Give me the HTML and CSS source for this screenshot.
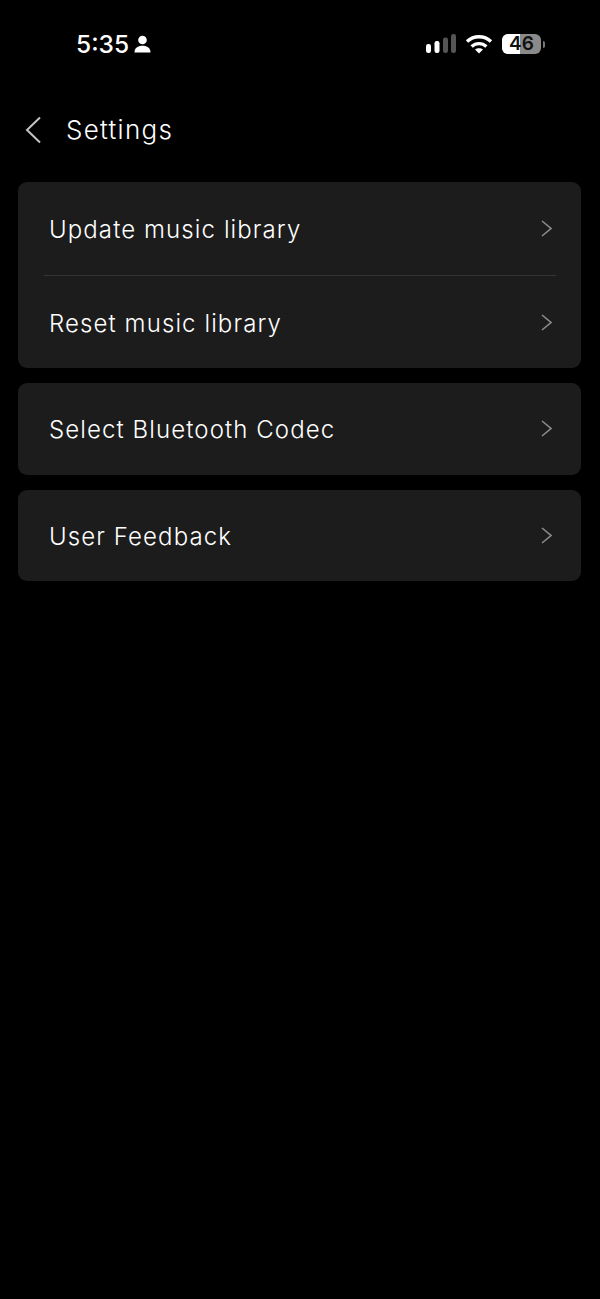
FILE: index.html
```html
<!DOCTYPE html>
<html lang="en">
<head>
<meta charset="utf-8">
<title>Settings</title>
<link rel="stylesheet" href="styles.css">
</head>
<body>
<div class="status">
  <div class="status-left">
    <span class="time">5:35</span>
    <svg class="person" width="17" height="18" viewBox="0 0 17 18"><circle cx="8.5" cy="5" r="4.300" fill="#fff"/><path d="M0.500 17.500c0-4.600 3.300-6.700 8-6.700s8 2.100 8 6.700z" fill="#fff"/></svg>
  </div>
  <div class="status-right">
    <svg width="30" height="20" viewBox="0 0 30 20"><rect x="0" y="10" width="5" height="9" rx="2.200" fill="#fff"/><rect x="8.500" y="7" width="5" height="12" rx="2.200" fill="#fff"/><rect x="17" y="3.500" width="5" height="15.500" rx="2.200" fill="#555"/><rect x="25" y="0" width="5" height="19" rx="2.200" fill="#555"/></svg>
    <svg class="wifi" width="28" height="20" viewBox="0 0 28 20" fill="none" stroke="#fff" stroke-width="3.400"><path d="M2 7.500c6.800-6.400 17.200-6.400 24 0"/><path d="M6.600 12.500c4.400-3.900 10.400-3.900 14.800 0"/><path d="M14 19.500l-4-4c2.300-1.800 5.700-1.800 8 0z" fill="#fff" stroke="none"/></svg>
    <div class="battery">
      <div class="battery-body"><div class="battery-fill"></div><span class="battery-num">46</span></div>
      <span class="battery-cap"></span>
    </div>
  </div>
</div>
<header class="nav">
  <svg class="back" width="16" height="28" viewBox="0 0 16 28" fill="none" stroke="#c4c4c4" stroke-width="2"><path d="M15 1.500L2 14l13 12.500"/></svg>
  <h1 class="title">Settings</h1>
</header>
<main class="groups">
  <section class="card">
    <div class="row row-first"><span class="label">Update music library</span><svg class="chev" width="11" height="17" viewBox="0 0 11 17" fill="none" stroke="#8c8c8c" stroke-width="1.600"><path d="M1 1l9 7.500L1 16"/></svg></div>
    <div class="divider"></div>
    <div class="row row-second"><span class="label">Reset music library</span><svg class="chev" width="11" height="17" viewBox="0 0 11 17" fill="none" stroke="#8c8c8c" stroke-width="1.600"><path d="M1 1l9 7.500L1 16"/></svg></div>
  </section>
  <section class="card">
    <div class="row"><span class="label">Select Bluetooth Codec</span><svg class="chev" width="11" height="17" viewBox="0 0 11 17" fill="none" stroke="#8c8c8c" stroke-width="1.600"><path d="M1 1l9 7.500L1 16"/></svg></div>
  </section>
  <section class="card">
    <div class="row"><span class="label">User Feedback</span><svg class="chev" width="11" height="17" viewBox="0 0 11 17" fill="none" stroke="#8c8c8c" stroke-width="1.600"><path d="M1 1l9 7.500L1 16"/></svg></div>
  </section>
</main>
</body>
</html>
```
FILE: styles.css
```css
* { box-sizing: border-box; }
html, body { margin: 0; padding: 0; background: #000; }
body { width: 600px; height: 1299px; overflow: hidden; font-family: "Inter", "Liberation Sans", sans-serif; color: #f2f2f2; }
.status { height: 88px; display: flex; justify-content: space-between; align-items: center; padding: 0 55px 0 76px; }
.status-left { display: flex; align-items: center; gap: 5px; }
.time { font-size: 24.500px; font-weight: 500; color: #fff; line-height: 30px; }
.person { display: block; }
.status-right { display: flex; align-items: center; gap: 9px; }
.wifi { display: block; }
.battery { display: flex; align-items: center; gap: 2px; }
.battery-body { position: relative; width: 39px; height: 20px; border-radius: 6px; background: #8a8a8a; display: flex; align-items: center; justify-content: center; }
.battery-fill { position: absolute; left: 0; top: 0; bottom: 0; width: 18px; background: #fff; border-radius: 6px 0 0 6px; }
.battery-num { position: relative; font-size: 19px; font-weight: 600; color: #111; line-height: 20px; }
.battery-cap { width: 2px; height: 7px; background: #777; border-radius: 0 2px 2px 0; }
.nav { height: 84px; display: flex; align-items: center; padding: 0 0 0 25px; margin-bottom: 10px; gap: 25px; }
.back { display: block; }
.title { margin: 0; font-size: 26px; font-weight: 300; letter-spacing: 1.300px; color: #fff; position: relative; top: -1px; }
.groups { display: flex; flex-direction: column; gap: 15px; padding: 0 19px 0 18px; }
.card { background: #1c1c1c; border-radius: 9px; }
.row { height: 91.500px; display: flex; justify-content: space-between; align-items: center; padding: 0 29px 0 31px; }
.row-first { height: 93px; }
.row-second { height: 92px; }
.label { font-size: 24px; font-weight: 300; letter-spacing: 1.100px; color: #fff; padding-top: 2px; }
.chev { display: block; }
.divider { height: 1px; margin: 0 25px 0 26px; background: #333; }
```
